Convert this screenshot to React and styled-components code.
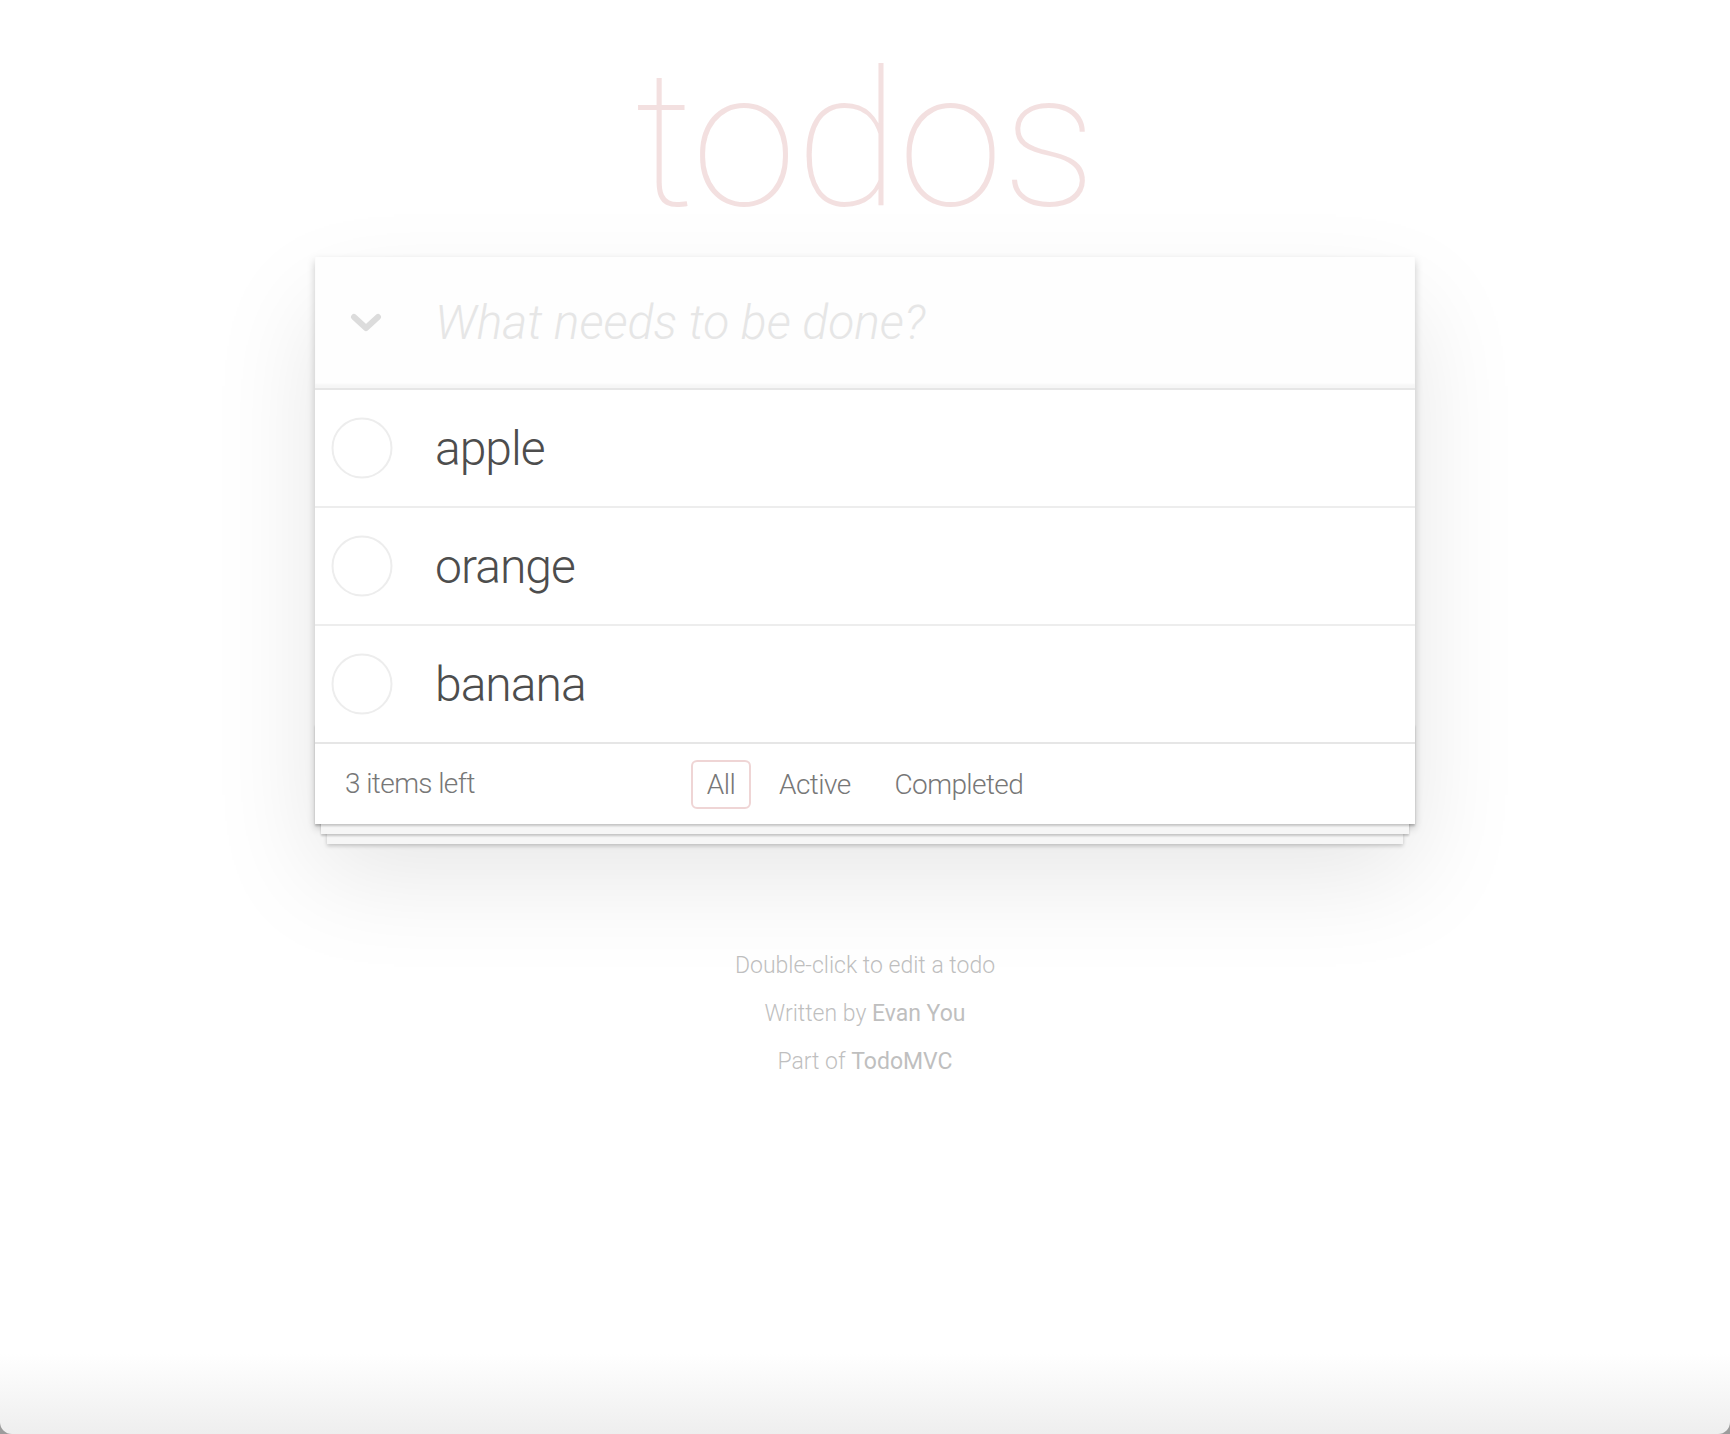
import React from 'react';
import styled, { createGlobalStyle } from 'styled-components';

const GlobalStyle = createGlobalStyle`
    html {
        background: #9c9c9c;
    }
    body {
        margin: 0;
        font-family: Roboto, "Noto Sans", sans-serif;
        font-weight: 300;
        color: #4d4d4d;
        -webkit-font-smoothing: antialiased;
    }
`;

const Page = styled.div`
    min-height: 100vh;
    box-sizing: border-box;
    padding-top: 40px;
    display: flex;
    flex-direction: column;
    align-items: center;
    background: linear-gradient(to bottom, #fff calc(100% - 80px), #eeeeee 100%);
    border-radius: 0 0 12px 12px;
`;

const Title = styled.h1`
    margin: 0 0 17px;
    font-size: 190px;
    line-height: 200px;
    font-weight: 100;
    letter-spacing: -1px;
    color: rgba(175, 47, 47, 0.15);
    text-align: center;
`;

const Card = styled.section`
    width: 1100px;
    background: #fff;
    position: relative;
    box-shadow: 0 4px 8px 0 rgba(0, 0, 0, 0.2), 0 50px 100px 0 rgba(0, 0, 0, 0.1);
`;

const Header = styled.header`
    display: flex;
    align-items: center;
    height: 131px;
    background: rgba(0, 0, 0, 0.003);
    box-shadow: inset 0 -4px 2px rgba(0, 0, 0, 0.03);
`;

const ToggleAll = styled.div`
    width: 120px;
    flex: none;
    display: flex;
    align-items: center;
    padding-left: 35px;
    box-sizing: border-box;
`;

const NewTodo = styled.input`
    flex: 1;
    border: none;
    outline: none;
    background: transparent;
    padding: 0 32px 0 0;
    font-family: inherit;
    font-size: 48px;
    font-weight: 300;
    color: #4d4d4d;
    &::placeholder {
        font-style: italic;
        font-weight: 300;
        color: #e6e6e6;
    }
`;

const List = styled.ul`
    margin: 0;
    padding: 0;
    list-style: none;
    border-top: 2px solid #e6e6e6;
`;

const Row = styled.li`
    display: flex;
    align-items: center;
    border-bottom: 2px solid #ededed;
    &:last-child {
        border-bottom: none;
    }
`;

const Check = styled.div`
    width: 120px;
    flex: none;
    padding-left: 16px;
    box-sizing: border-box;
    display: flex;
    align-items: center;
`;

const Label = styled.label`
    flex: 1;
    padding: 31px 30px 29px 0;
    font-size: 48px;
    line-height: 56px;
    letter-spacing: -1px;
    color: #4d4d4d;
`;

const Footer = styled.footer`
    position: relative;
    display: grid;
    grid-template-columns: 1fr auto 1fr;
    align-items: center;
    height: 80px;
    padding: 0 30px;
    border-top: 2px solid #e6e6e6;
    color: #777;
    font-size: 28px;
    letter-spacing: -0.6px;

    &::before {
        content: '';
        position: absolute;
        left: 0;
        right: 0;
        bottom: 0;
        height: 100px;
        overflow: hidden;
        box-shadow: 0 2px 2px rgba(0, 0, 0, 0.2),
            0 16px 0 -6px #f6f6f6,
            0 18px 2px -6px rgba(0, 0, 0, 0.2),
            0 32px 0 -12px #f6f6f6,
            0 34px 4px -12px rgba(0, 0, 0, 0.2);
    }
`;

const Count = styled.span`
    position: relative;
    line-height: 40px;
`;

const Filters = styled.ul`
    position: relative;
    display: flex;
    margin: 0;
    padding: 0;
    list-style: none;
`;

const FilterLink = styled.a`
    display: block;
    margin: 0 6px;
    padding: 6px 14px;
    line-height: 33px;
    color: inherit;
    text-decoration: none;
    border: 2px solid ${p => (p.$selected ? 'rgba(175, 47, 47, 0.2)' : 'transparent')};
    border-radius: 6px;
`;

const Info = styled.footer`
    margin-top: 130px;
    color: #bfbfbf;
    font-size: 23px;
    text-align: center;
    text-shadow: 0 1px 0 rgba(255, 255, 255, 0.5);

    p {
        margin: 25px 0;
        line-height: 23px;
    }
    p:first-child {
        margin-top: 0;
    }
    a {
        color: inherit;
        font-weight: 400;
        text-decoration: none;
    }
`;

const Chevron = () => (
    <svg width="32" height="20" viewBox="0 0 32 20">
        <path d="M4 4 L16 15 L28 4" fill="none" stroke="#dcdcdc" strokeWidth="6" strokeLinecap="round" strokeLinejoin="round" />
    </svg>
);

const Circle = () => (
    <svg width="62" height="62" viewBox="0 0 62 62">
        <circle cx="31" cy="31" r="29.5" fill="none" stroke="#ededed" strokeWidth="2" />
    </svg>
);

const todos = ['apple', 'orange', 'banana'];
const filters = ['All', 'Active', 'Completed'];

export default function App() {
    return (
        <Page>
            <GlobalStyle />
            <Title>todos</Title>
            <Card>
                <Header>
                    <ToggleAll><Chevron /></ToggleAll>
                    <NewTodo placeholder="What needs to be done?" />
                </Header>
                <List>
                    {todos.map(t => (
                        <Row key={t}>
                            <Check><Circle /></Check>
                            <Label>{t}</Label>
                        </Row>
                    ))}
                </List>
                <Footer>
                    <Count>3 items left</Count>
                    <Filters>
                        {filters.map(f => (
                            <li key={f}>
                                <FilterLink href="#" $selected={f === 'All'}>{f}</FilterLink>
                            </li>
                        ))}
                    </Filters>
                    <span />
                </Footer>
            </Card>
            <Info>
                <p>Double-click to edit a todo</p>
                <p>Written by <a href="#">Evan You</a></p>
                <p>Part of <a href="#">TodoMVC</a></p>
            </Info>
        </Page>
    );
}
